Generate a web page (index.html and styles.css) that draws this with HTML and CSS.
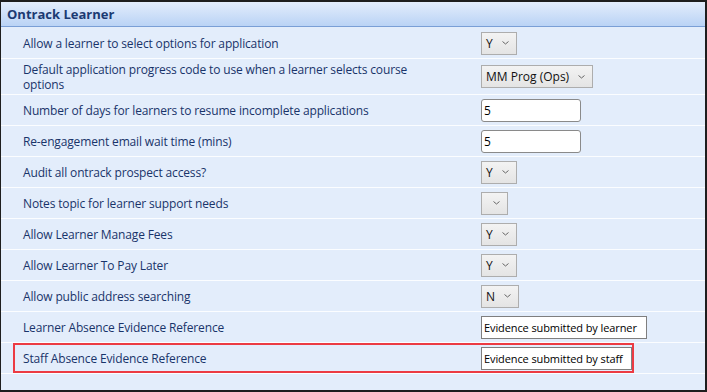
FILE: index.html
```html
<!DOCTYPE html>
<html lang="en">
<head>
    <meta charset="UTF-8">
    <title>Ontrack Learner</title>
    <link rel="stylesheet" href="styles.css">
</head>
<body>
    <div class="panel">
        <div class="panel-header">Ontrack Learner</div>

        <div class="settings">
            <div class="row">
                <div class="label">Allow a learner to select options for application</div>
                <span class="select">Y<svg class="chev" width="7" height="4" viewBox="0 0 7 4"><path d="M0.5 0.5l3 2.5l3-2.5"/></svg></span>
            </div>
            <div class="row tall">
                <div class="label">Default application progress code to use when a learner selects course options</div>
                <span class="select">MM Prog (Ops)<svg class="chev" width="7" height="4" viewBox="0 0 7 4"><path d="M0.5 0.5l3 2.5l3-2.5"/></svg></span>
            </div>
            <div class="row">
                <div class="label">Number of days for learners to resume incomplete applications</div>
                <input class="text-input" type="text" value="5" readonly>
            </div>
            <div class="row">
                <div class="label">Re-engagement email wait time (mins)</div>
                <input class="text-input" type="text" value="5" readonly>
            </div>
            <div class="row">
                <div class="label">Audit all ontrack prospect access?</div>
                <span class="select">Y<svg class="chev" width="7" height="4" viewBox="0 0 7 4"><path d="M0.5 0.5l3 2.5l3-2.5"/></svg></span>
            </div>
            <div class="row">
                <div class="label">Notes topic for learner support needs</div>
                <span class="select empty"><svg class="chev" width="7" height="4" viewBox="0 0 7 4"><path d="M0.5 0.5l3 2.5l3-2.5"/></svg></span>
            </div>
            <div class="row">
                <div class="label">Allow Learner Manage Fees</div>
                <span class="select">Y<svg class="chev" width="7" height="4" viewBox="0 0 7 4"><path d="M0.5 0.5l3 2.5l3-2.5"/></svg></span>
            </div>
            <div class="row">
                <div class="label">Allow Learner To Pay Later</div>
                <span class="select">Y<svg class="chev" width="7" height="4" viewBox="0 0 7 4"><path d="M0.5 0.5l3 2.5l3-2.5"/></svg></span>
            </div>
            <div class="row">
                <div class="label">Allow public address searching</div>
                <span class="select">N<svg class="chev" width="7" height="4" viewBox="0 0 7 4"><path d="M0.5 0.5l3 2.5l3-2.5"/></svg></span>
            </div>
            <div class="row">
                <div class="label">Learner Absence Evidence Reference</div>
                <input class="text-input wide" type="text" value="Evidence submitted by learner" readonly>
            </div>
            <div class="row flagged">
                <div class="flag">
                    <div class="label">Staff Absence Evidence Reference</div>
                    <input class="text-input staff" type="text" value="Evidence submitted by staff" readonly>
                </div>
            </div>
        </div>
    </div>
</body>
</html>
```

FILE: styles.css
```css
/* base */
* {
    box-sizing: border-box;
}

body {
    margin: 0;
    font-family: "Open Sans", "Noto Sans", sans-serif;
    font-size: 12px;
}

/* panel frame */
.panel {
    width: 707px;
    height: 392px;
    border: 2px solid #1e1e1e;
    border-left-width: 1px;
    background-color: #e3edfb;
}

.panel-header {
    height: 25px;
    padding-left: 6px;
    display: flex;
    align-items: center;
    background: linear-gradient(#e3edfc, #bad3f5);
    border-bottom: 1px solid #7a9fd6;
    color: #1b3a72;
    font-weight: 700;
    font-size: 13px;
}

/* settings rows */
.settings {
    padding-top: 1px;
}

.row {
    display: flex;
    align-items: center;
    height: 31px;
    padding-left: 22px;
    border-bottom: 1px solid #fbfdff;
}

.row.tall {
    height: 36px;
}

.label {
    width: 400px;
    margin-right: 58px;
    color: #19346a;
    font-weight: 500;
    letter-spacing: -0.15px;
    line-height: 15px;
}

.row.flagged {
    padding-left: 12px;
}

.flag {
    display: flex;
    align-items: center;
    height: 30px;
    padding-left: 8px;
    border: 2px solid #ec3b43;
}

/* controls */
.select {
    display: inline-flex;
    align-items: center;
    gap: 9px;
    height: 23px;
    padding: 0 7px 0 4px;
    border: 1px solid #adadad;
    background: linear-gradient(#f3f3f3, #e4e4e4);
    color: #111;
}

.select.empty {
    width: 27px;
    justify-content: flex-end;
}

.chev path {
    fill: none;
    stroke: #666;
    stroke-width: 1;
}

.text-input {
    width: 100px;
    height: 23px;
    padding: 0 2px;
    border: 1px solid #8a8a8a;
    border-radius: 3px;
    background: #fff;
    font: inherit;
    color: #000;
    outline: none;
}

.text-input.wide,
.text-input.staff {
    width: 166px;
    border-radius: 0;
    border-color: #7f7f7f;
    font-size: 11px;
    letter-spacing: -0.1px;
}

.text-input.staff {
    width: 151px;
}
```
